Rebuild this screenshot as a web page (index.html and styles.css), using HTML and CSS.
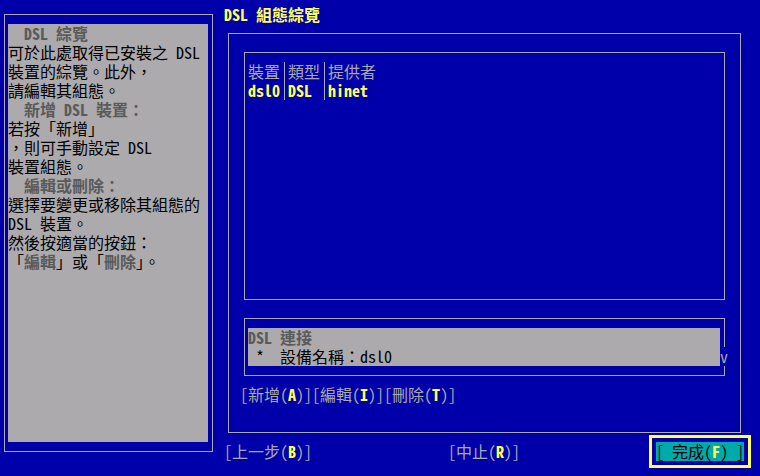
FILE: index.html
```html
<!DOCTYPE html>
<html lang="zh-Hant">
<head>
<meta charset="utf-8">
<title>DSL 組態綜覽</title>
<link rel="stylesheet" href="styles.css">
</head>
<body>
<div class="screen">
  <aside class="help">
    <div class="help-body">
      <div class="ln hd">  DSL 綜覽</div>
      <div class="ln">可於此處取得已安裝之 DSL</div>
      <div class="ln">裝置的綜覽。此外，</div>
      <div class="ln">請編輯其組態。</div>
      <div class="ln hd">  新增 DSL 裝置：</div>
      <div class="ln">若按「新增」</div>
      <div class="ln">，則可手動設定 DSL</div>
      <div class="ln">裝置組態。</div>
      <div class="ln hd">  編輯或刪除：</div>
      <div class="ln">選擇要變更或移除其組態的</div>
      <div class="ln">DSL 裝置。</div>
      <div class="ln">然後按適當的按鈕：</div>
      <div class="ln">「<b class="kw">編輯</b>」或「<b class="kw">刪除</b>」。</div>
    </div>
  </aside>
  <main class="main">
    <h1 class="title">DSL 組態綜覽</h1>
    <section class="frame">
      <div class="list">
        <div class="table">
          <span class="th">裝置</span><span class="sep"></span><span class="th">類型</span><span class="sep"></span><span class="th">提供者</span>
          <span class="td">dsl0</span><span class="td">DSL</span><span class="td">hinet</span>
        </div>
      </div>
      <div class="conn">
        <div class="conn-body">
          <div class="ln hd">DSL 連接</div>
          <div class="ln"> *  設備名稱：dsl0</div>
        </div>
        <span class="more">v</span>
      </div>
      <div class="actions"><span class="btn">[新增(<b class="hot">A</b>)]</span><span class="btn">[編輯(<b class="hot">I</b>)]</span><span class="btn">[刪除(<b class="hot">T</b>)]</span></div>
    </section>
    <div class="nav">
      <span class="btn">[上一步(<b class="hot">B</b>)]</span>
      <span class="btn">[中止(<b class="hot">R</b>)]</span>
      <span class="btn done">[ 完成(<b class="hot">F</b>) ]</span>
    </div>
  </main>
</div>
</body>
</html>
```
FILE: styles.css
```css
html, body {
  margin: 0;
  padding: 0;
  width: 760px;
  height: 476px;
  overflow: hidden;
  background: #0000aa;
}
body {
  font-family: "Noto Sans Mono CJK TC", "Noto Sans CJK TC", monospace;
  font-size: 16px;
  line-height: 19px;
  color: #aaaaaa;
}
.screen {
  display: flex;
  align-items: flex-start;
  padding-top: 5px;
}
.ln {
  height: 19px;
  white-space: pre;
}
.help {
  box-sizing: border-box;
  margin: 9px 3px 0 4px;
  width: 209px;
  height: 438px;
  border: 1px solid #aaaaaa;
  padding: 9px 4px 9px 3px;
  flex: none;
}
.help-body {
  background: #adaaad;
  width: 200px;
  height: 418px;
  color: #000000;
}
.hd {
  color: #5a5a5a;
  font-weight: bold;
}
.kw {
  color: #5a5a5a;
  font-weight: bold;
}
.main {
  width: 544px;
  flex: none;
}
.title {
  margin: 0;
  padding-left: 8px;
  height: 19px;
  font-size: 16px;
  line-height: 19px;
  font-weight: bold;
  color: #ffff55;
}
.frame {
  box-sizing: border-box;
  margin: 9px 0 0 12px;
  width: 513px;
  height: 400px;
  border: 1px solid #aaaaaa;
}
.list {
  box-sizing: border-box;
  margin: 18px 0 0 15px;
  width: 481px;
  height: 248px;
  border: 1px solid #aaaaaa;
  padding: 9px 0 0 3px;
}
.table {
  display: grid;
  grid-template-columns: 32px 8px 32px 8px 1fr;
  grid-auto-rows: 19px;
}
.th, .td {
  white-space: pre;
}
.td {
  color: #ffff55;
  font-weight: bold;
}
.sep {
  grid-row: span 2;
  background: linear-gradient(#aaaaaa, #aaaaaa) 4px 0 / 1px 100% no-repeat;
}
.conn {
  position: relative;
  box-sizing: border-box;
  margin: 18px 0 0 15px;
  width: 481px;
  height: 58px;
  border: 1px solid #aaaaaa;
  padding: 9px 3px 0 3px;
}
.conn-body {
  background: #adaaad;
  width: 472px;
  height: 38px;
  color: #000000;
}
.more {
  position: absolute;
  top: 28px;
  left: 475px;
  width: 8px;
  height: 19px;
  background: #0000aa;
  color: #aaaaaa;
  text-align: center;
}
.actions {
  margin: 9px 0 0 11px;
  height: 19px;
  white-space: pre;
}
.btn {
  white-space: pre;
}
.hot {
  color: #ffff55;
  font-weight: bold;
}
.nav {
  display: flex;
  gap: 136px;
  margin-top: 9px;
  padding-left: 8px;
  height: 19px;
}
.done {
  background: #00aaaa;
  color: #000000;
  outline: 3px solid #ffff55;
  outline-offset: 4px;
}
```
